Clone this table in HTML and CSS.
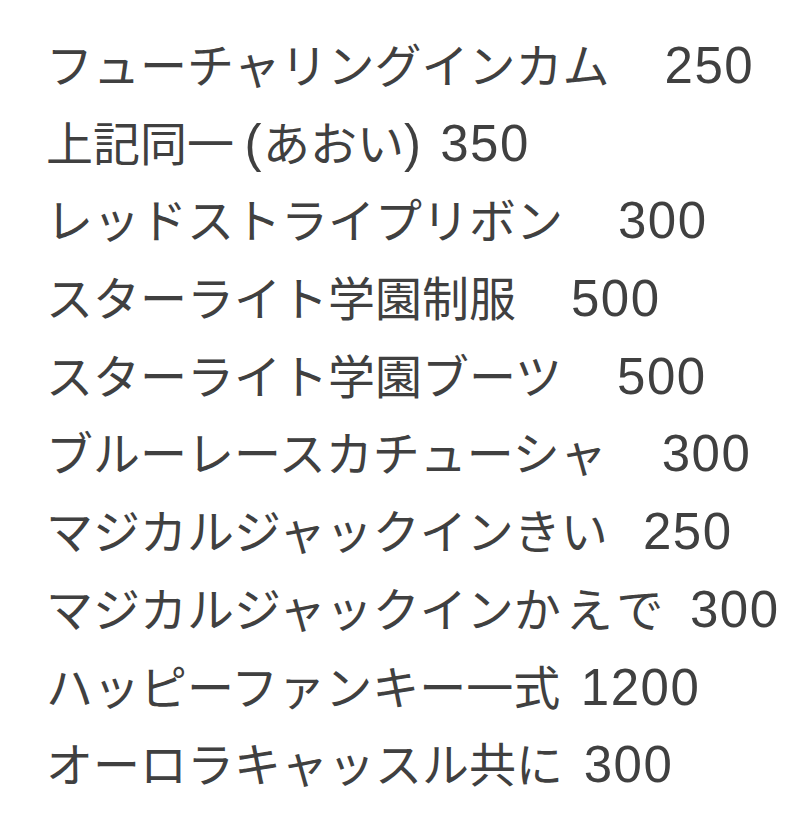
FILE: index.html
```html
<!DOCTYPE html>
<html lang="ja">
<head>
<meta charset="utf-8">
<link rel="stylesheet" href="styles.css">
</head>
<body>
<ul class="list">
<li>フューチャリングインカム　<span class="num wide">250</span></li>
<li>上記同一 <span class="num">(</span>あおい<span class="num">) 350</span></li>
<li>レッドストライプリボン　<span class="num wide">300</span></li>
<li>スターライト学園制服　<span class="num wide">500</span></li>
<li>スターライト学園ブーツ　<span class="num wide">500</span></li>
<li>ブルーレースカチューシャ　<span class="num wide">300</span></li>
<li>マジカルジャックインきい<span class="num">  250</span></li>
<li>マジカルジャックイン<span class="hira">かえで</span><span class="num gap8"> 300</span></li>
<li>ハッピーファンキー一式<span class="num sp"> 1200</span></li>
<li>オーロラキャッスル共に<span class="num sp"> 300</span></li>
</ul>
</body>
</html>
```
FILE: styles.css
```css
html, body {
  margin: 0;
  padding: 0;
  background: #ffffff;
}
body {
  width: 809px;
  height: 823px;
  overflow: hidden;
}
.list {
  list-style: none;
  margin: 0;
  padding: 24px 0 0 46px;
  font-family: "Noto Sans CJK JP", "Liberation Sans", sans-serif;
  font-size: 47px;
  line-height: 77.7px;
  color: #404040;
}
.list li {
  margin: 0;
  height: 77.7px;
  white-space: pre;
}
.num {
  font-family: "Liberation Sans", "Noto Sans CJK JP", sans-serif;
  font-size: 51px;
  letter-spacing: 1.5px;
  word-spacing: 2px;
}
.wide {
  margin-left: 8px;
}
.sp {
  word-spacing: 5px;
}
.hira {
  letter-spacing: 5px;
}
.gap8 {
  margin-left: 4px;
}
```
